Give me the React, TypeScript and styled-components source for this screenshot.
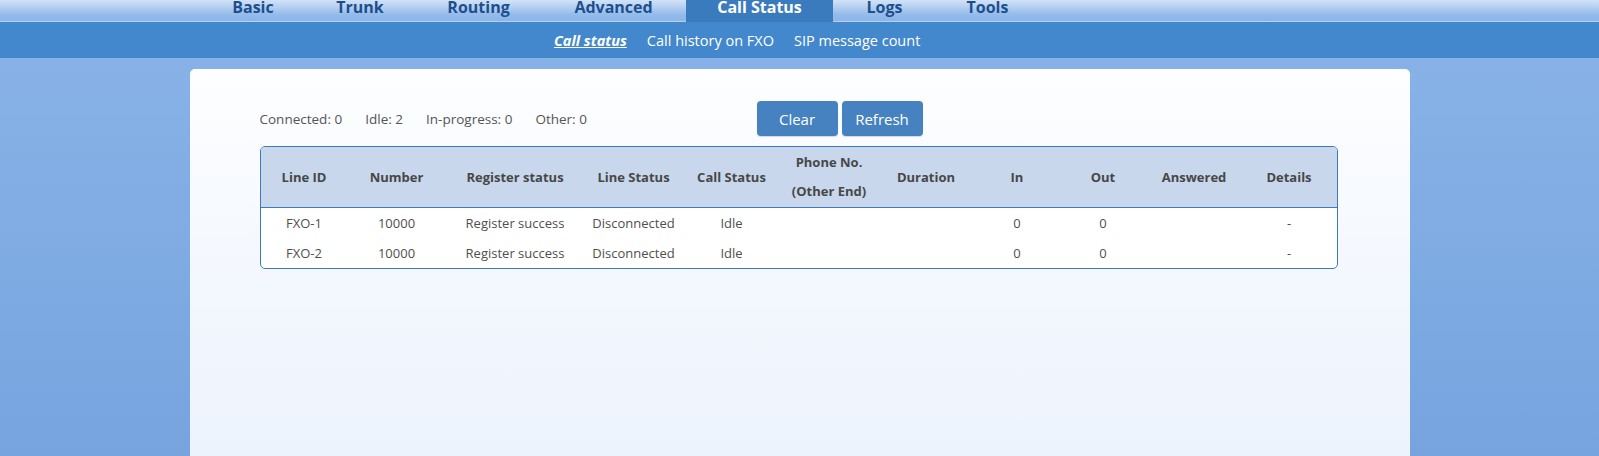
import React from 'react'
import styled, { createGlobalStyle } from 'styled-components'

const GlobalStyle = createGlobalStyle`
  html, body {
    margin: 0;
    padding: 0;
  }
  body {
    font-family: 'Open Sans', 'Noto Sans', Arial, sans-serif;
    background: linear-gradient(180deg, #8ab4e8 0%, #77a4df 100%);
    min-height: 456px;
  }
  #root {
    min-height: 456px;
    display: flex;
    flex-direction: column;
  }
`

const mainTabs = [
  { label: 'Basic', width: 102 },
  { label: 'Trunk', width: 108 },
  { label: 'Routing', width: 125 },
  { label: 'Advanced', width: 141 },
  { label: 'Call Status', width: 147, active: true },
  { label: 'Logs', width: 99 },
  { label: 'Tools', width: 103 },
]

const subTabs = [
  { label: 'Call status', active: true },
  { label: 'Call history on FXO' },
  { label: 'SIP message count' },
]

const counters = [
  ['Connected', 0],
  ['Idle', 2],
  ['In-progress', 0],
  ['Other', 0],
]

const columns = [
  { title: 'Line ID', width: 87 },
  { title: 'Number', width: 98 },
  { title: 'Register status', width: 139 },
  { title: 'Line Status', width: 98 },
  { title: 'Call Status', width: 98 },
  { title: ['Phone No.', '(Other End)'], width: 97 },
  { title: 'Duration', width: 97 },
  { title: 'In', width: 85 },
  { title: 'Out', width: 87 },
  { title: 'Answered', width: 95 },
  { title: 'Details', width: 95 },
]

const lines = [
  ['FXO-1', '10000', 'Register success', 'Disconnected', 'Idle', '', '', '0', '0', '', '-'],
  ['FXO-2', '10000', 'Register success', 'Disconnected', 'Idle', '', '', '0', '0', '', '-'],
]

const TopNav = styled.nav`
  height: 21px;
  border-bottom: 1px solid #b6d0f0;
  background: linear-gradient(180deg, #d2e3f7 0%, #b4cff1 35%, #93bbea 70%, #8cb5e8 100%);
  display: flex;
  gap: 2px;
  padding-left: 202px;
`

const NavTab = styled.a<{ $active?: boolean; $width: number }>`
  width: ${({ $width }) => $width}px;
  height: 22px;
  margin-bottom: -1px;
  display: flex;
  justify-content: center;
  align-items: flex-start;
  font-size: 16px;
  font-weight: 700;
  line-height: 15px;
  color: ${({ $active }) => ($active ? '#ffffff' : '#1d4f8e')};
  background: ${({ $active }) => ($active ? '#3a7bbd' : 'transparent')};
  cursor: pointer;
`

const SubNav = styled.div`
  height: 36px;
  background: #4388cc;
  display: flex;
  align-items: center;
  padding-left: 544px;
`

const SubTab = styled.a<{ $active?: boolean }>`
  margin: 0 10px;
  font-size: 14.5px;
  color: #ffffff;
  font-weight: ${({ $active }) => ($active ? 700 : 400)};
  font-style: ${({ $active }) => ($active ? 'italic' : 'normal')};
  text-decoration: ${({ $active }) => ($active ? 'underline' : 'none')};
  cursor: pointer;
`

const Main = styled.main`
  flex: 1;
  display: flex;
  justify-content: center;
  padding-top: 11px;
`

const Card = styled.section`
  width: 1220px;
  box-sizing: border-box;
  padding: 32px 72px 0 70px;
  border-radius: 5px 5px 0 0;
  background: linear-gradient(180deg, #fdfeff 0%, #f4f8fe 50%, #edf3fd 100%);
`

const StatusRow = styled.div`
  height: 35px;
  display: flex;
  align-items: center;
`

const Counters = styled.div`
  width: 497px;
  display: flex;
  gap: 23px;
  font-size: 13.5px;
  color: #555555;
`

const Buttons = styled.div`
  display: flex;
  gap: 4px;
`

const Button = styled.button`
  width: 81px;
  height: 35px;
  border: none;
  border-radius: 4px;
  background: #4682c0;
  box-shadow: 0 1px 1px rgba(0, 0, 0, 0.15);
  color: #ffffff;
  font-family: inherit;
  font-size: 15px;
  cursor: pointer;
`

const Table = styled.table`
  margin-top: 10px;
  width: 1078px;
  table-layout: fixed;
  border-collapse: separate;
  border-spacing: 0;
  border: 1px solid #3a7bbd;
  border-radius: 5px;
  overflow: hidden;
  background: #ffffff;
`

const HeadCell = styled.th`
  height: 60px;
  padding: 0;
  background: #c8d7ec;
  border-bottom: 1px solid #3a7bbd;
  font-size: 13px;
  font-weight: 700;
  line-height: 29px;
  color: #474747;
  text-align: center;
  vertical-align: middle;
`

const Cell = styled.td`
  height: 30px;
  padding: 0;
  font-size: 13px;
  color: #4f4f4f;
  text-align: center;
  vertical-align: middle;
  white-space: nowrap;
`

export default function App() {
  return (
    <>
      <GlobalStyle />
      <TopNav>
        {mainTabs.map((tab) => (
          <NavTab key={tab.label} $width={tab.width} $active={tab.active}>
            {tab.label}
          </NavTab>
        ))}
      </TopNav>
      <SubNav>
        {subTabs.map((tab) => (
          <SubTab key={tab.label} $active={tab.active}>
            {tab.label}
          </SubTab>
        ))}
      </SubNav>
      <Main>
        <Card>
          <StatusRow>
            <Counters>
              {counters.map(([name, count]) => (
                <span key={name}>
                  {name}: {count}
                </span>
              ))}
            </Counters>
            <Buttons>
              <Button>Clear</Button>
              <Button>Refresh</Button>
            </Buttons>
          </StatusRow>
          <Table>
            <colgroup>
              {columns.map((col, i) => (
                <col key={i} style={{ width: col.width }} />
              ))}
            </colgroup>
            <thead>
              <tr>
                {columns.map((col, i) => (
                  <HeadCell key={i}>
                    {Array.isArray(col.title)
                      ? col.title.map((part, j) => (
                          <React.Fragment key={j}>
                            {j > 0 && <br />}
                            {part}
                          </React.Fragment>
                        ))
                      : col.title}
                  </HeadCell>
                ))}
              </tr>
            </thead>
            <tbody>
              {lines.map((row) => (
                <tr key={row[0]}>
                  {row.map((value, i) => (
                    <Cell key={i}>{value}</Cell>
                  ))}
                </tr>
              ))}
            </tbody>
          </Table>
        </Card>
      </Main>
    </>
  )
}
